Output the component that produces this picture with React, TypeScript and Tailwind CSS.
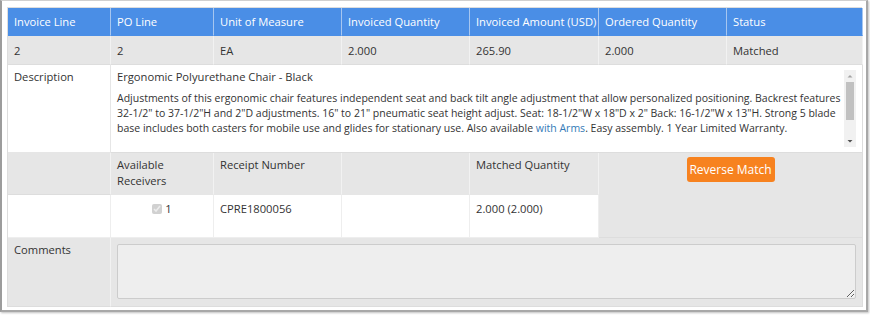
import React from "react";

const headers = [
  "Invoice Line",
  "PO Line",
  "Unit of Measure",
  "Invoiced Quantity",
  "Invoiced Amount (USD)",
  "Ordered Quantity",
  "Status",
];

const values = ["2", "2", "EA", "2.000", "265.90", "2.000", "Matched"];

function App() {
  return (
    <div className="w-[870px] h-[315px] bg-white font-['Open_Sans',sans-serif] text-[11.2px] leading-[15px] text-[#333333]">
      <div className="w-[868px] h-[312px] border-l-2 border-r-2 border-b-2 border-t border-l-[#9c9c9c] border-r-[#a8a8a8] border-b-[#a8a8a8] border-t-[#d0d0d0] pt-[6px] pl-[5px] shadow-[1px_1px_2px_rgba(0,0,0,0.25)]">
        <div className="grid w-[855px] grid-cols-[103px_103px_128px_128px_129px_128px_136px] grid-rows-[28px_29px_88px_42px_43px_69px] border-l border-t border-[#dddddd]">
          {headers.map((h) => (
            <div
              key={h}
              className="flex items-center px-[6px] bg-[#4a8ee6] text-white whitespace-nowrap border-r border-b border-r-[#a6c6f0] border-b-[#4a8ee6] last:border-r-[#dddddd]"
            >
              {h}
            </div>
          ))}
          {values.map((v, i) => (
            <div
              key={i}
              className="flex items-center px-[6px] pt-[1px] bg-[#e6e6e6] border-r border-b border-r-[#f2f2f2] border-b-[#dddddd]"
            >
              {v}
            </div>
          ))}

          <div className="px-[6px] pt-[4px] bg-white border-r border-b border-[#e6e6e6]">
            Description
          </div>
          <div className="col-span-6 bg-white border-r border-b border-[#dddddd] pl-[6px] pr-[6px] pt-[5px]">
            <div className="flex h-[77px]">
              <div className="flex-1 -mt-px">
                <p>Ergonomic Polyurethane Chair - Black</p>
                <p className="mt-[7px] text-[10.5px]">
                  Adjustments of this ergonomic chair features independent seat
                  and back tilt angle adjustment that allow personalized
                  positioning. Backrest features 32-1/2" to 37-1/2"H and 2"D
                  adjustments. 16" to 21" pneumatic seat height adjust. Seat:
                  18-1/2"W x 18"D x 2" Back: 16-1/2"W x 13"H. Strong 5 blade
                  base includes both casters for mobile use and glides for
                  stationary use. Also available{" "}
                  <span className="text-[#337ab7]">with Arms</span>. Easy
                  assembly. 1 Year Limited Warranty.
                </p>
              </div>
              <div className="w-[12px] bg-[#f1f1f1] flex flex-col items-center">
                <svg width="12" height="12" viewBox="0 0 12 12">
                  <path d="M3.5 7.5 L6 5 L8.5 7.5 Z" fill="#a3a3a3" />
                </svg>
                <div className="w-[8px] h-[38px] bg-[#c1c1c1]" />
                <div className="flex-1" />
                <svg width="12" height="12" viewBox="0 0 12 12">
                  <path d="M3.5 5 L6 7.5 L8.5 5 Z" fill="#505050" />
                </svg>
              </div>
            </div>
          </div>

          <div className="bg-[#e6e6e6] border-r border-b border-r-[#f2f2f2] border-b-[#dddddd]" />
          <div className="bg-[#e6e6e6] px-[6px] pt-[4px] leading-[16px] border-r border-b border-r-[#f2f2f2] border-b-[#e6e6e6]">
            Available
            <br />
            Receivers
          </div>
          <div className="bg-[#e6e6e6] px-[6px] pt-[4px] leading-[16px] border-r border-b border-r-[#f2f2f2] border-b-[#e6e6e6]">
            Receipt Number
          </div>
          <div className="bg-[#e6e6e6] border-r border-b border-r-[#f2f2f2] border-b-[#e6e6e6]" />
          <div className="bg-[#e6e6e6] px-[6px] pt-[4px] leading-[16px] border-r border-b border-r-[#f2f2f2] border-b-[#e6e6e6]">
            Matched Quantity
          </div>
          <div className="col-span-2 row-span-2 bg-[#e6e6e6] flex justify-center items-start pt-[4px] border-r border-b border-[#dddddd]">
            <button className="h-[25px] w-[88px] rounded-[3px] bg-[#f7821f] text-white text-[12px]">
              Reverse Match
            </button>
          </div>

          <div className="bg-white border-r border-b border-[#eeeeee]" />
          <div className="bg-white flex justify-center items-start pt-[6px] gap-[3px] border-r border-b border-[#eeeeee]">
            <input
              type="checkbox"
              checked
              disabled
              readOnly
              className="w-[10px] h-[10px] mt-[3px] accent-[#c8c8c8]"
            />
            <span>1</span>
          </div>
          <div className="bg-white px-[6px] pt-[6px] border-r border-b border-[#eeeeee]">
            CPRE1800056
          </div>
          <div className="bg-white border-r border-b border-[#eeeeee]" />
          <div className="bg-white px-[6px] pt-[6px] border-r border-b border-[#eeeeee]">
            2.000 (2.000)
          </div>

          <div className="bg-[#e6e6e6] px-[6px] pt-[4px] border-r border-b border-r-[#f2f2f2] border-b-[#dddddd]">
            Comments
          </div>
          <div className="col-span-6 bg-[#e6e6e6] pl-[6px] pr-[6px] pt-[6px] border-r border-b border-[#dddddd]">
            <textarea
              readOnly
              className="block w-full h-[55px] resize-y rounded-[2px] border border-[#cccccc] bg-[#eeeeee]"
            />
          </div>
        </div>
      </div>
    </div>
  );
}

export default App;
